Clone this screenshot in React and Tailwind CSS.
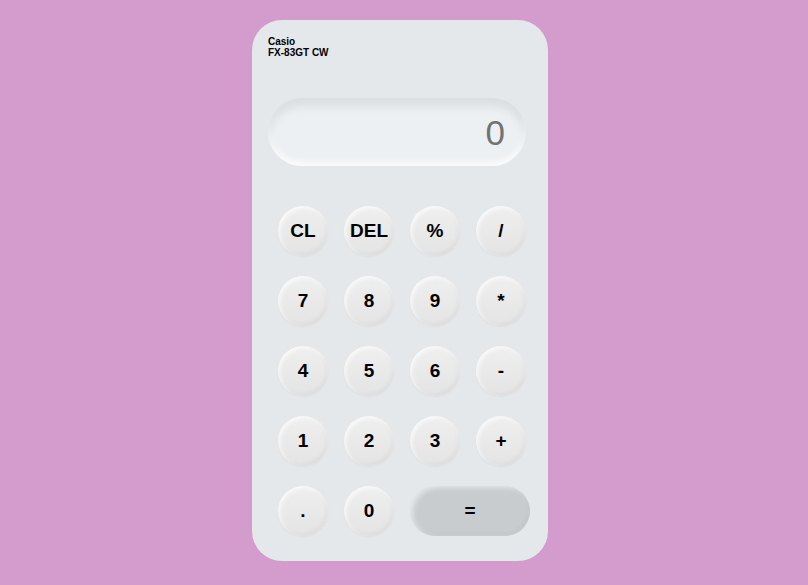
const rows = [
  ['CL', 'DEL', '%', '/'],
  ['7', '8', '9', '*'],
  ['4', '5', '6', '-'],
  ['1', '2', '3', '+'],
];

const Key = ({ label }) => (
  <button className="w-[50px] h-[50px] rounded-full bg-gradient-to-b from-[#efefef] to-[#e4e4e4] shadow-[inset_2px_2px_4px_rgba(255,255,255,0.7),inset_-2px_-2px_4px_rgba(0,0,0,0.04),0_1px_2px_rgba(0,0,0,0.04)] text-[19px] font-bold text-black flex items-center justify-center">
    {label}
  </button>
);

export default function App() {
  return (
    <div className="min-h-screen w-full bg-[#d39ccd] flex justify-center pt-5 pr-2 font-['Liberation_Sans',Arial,sans-serif]">
      <div className="w-[296px] h-[541px] rounded-[30px] bg-[#e4e8eb] px-4 pt-4">
        {/* Brand */}
        <div className="text-[10px] leading-[11px] font-bold text-black">
          <div>Casio</div>
          <div>FX-83GT CW</div>
        </div>

        {/* Display */}
        <div className="mt-[40px] w-[258px] h-[68px] rounded-full bg-[#edf0f2] shadow-[inset_0_8px_10px_rgba(0,0,0,0.08),inset_0_-4px_6px_rgba(255,255,255,0.8)] flex items-center justify-end pr-[21px]">
          <span className="text-[35px] text-[#707274] leading-none">0</span>
        </div>

        {/* Keys */}
        <div className="mt-[40px] ml-[10px] grid grid-cols-[50px_50px_50px_50px] gap-x-4 gap-y-5">
          {rows.flat().map((k) => (
            <Key key={k} label={k} />
          ))}
          <Key label="." />
          <Key label="0" />
          <button className="col-span-2 w-[120px] h-[50px] rounded-full bg-[#c8ccce] shadow-[inset_3px_2px_5px_rgba(255,255,255,0.5),inset_-2px_-2px_4px_rgba(0,0,0,0.03)] text-[19px] font-bold text-black flex items-center justify-center">
            =
          </button>
        </div>
      </div>
    </div>
  );
}
